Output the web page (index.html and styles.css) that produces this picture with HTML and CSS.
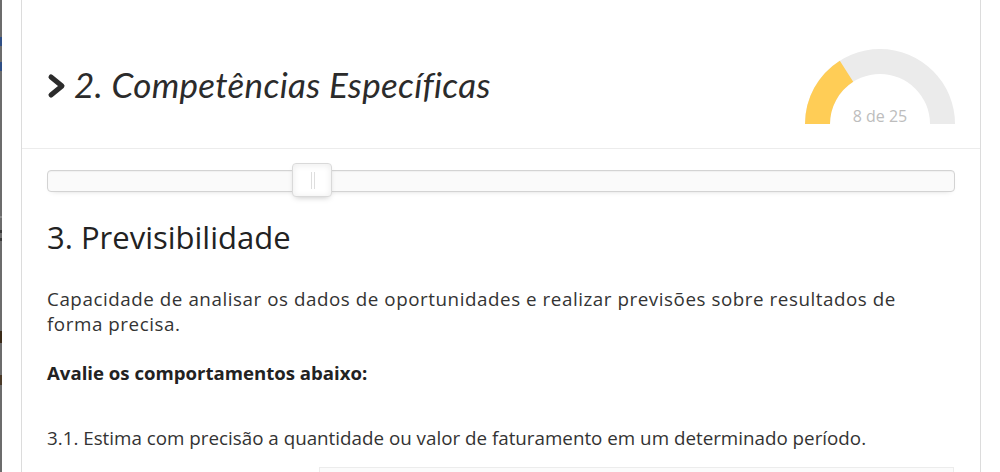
FILE: index.html
```html
<!DOCTYPE html>
<html lang="pt">
<head>
<meta charset="utf-8">
<title>Competências</title>
<link rel="stylesheet" href="styles.css">
</head>
<body>
<div class="page">
  <div class="strip"></div>
  <div class="gutter"></div>
  <div class="panel">
    <header class="head">
      <div class="title">
        <svg class="chev" width="20" height="26" viewBox="0 0 20 26" aria-hidden="true">
          <path d="M4 4 L15 13 L4 22" fill="none" stroke="#2b2b2b" stroke-width="5" stroke-linecap="round" stroke-linejoin="round"/>
        </svg>
        <h2>2. Competências Específicas</h2>
      </div>
      <svg class="gauge" width="150" height="75" viewBox="0 0 150 75">
        <path d="M0 75 A75 75 0 0 1 150 75 L125 75 A50 50 0 0 0 25 75 Z" fill="#ebebeb"/>
        <path d="M0 75 A75 75 0 0 1 34.81 11.68 L48.21 32.79 A50 50 0 0 0 25 75 Z" fill="#ffcd56"/>
        <text x="75" y="73" text-anchor="middle" class="gauge-text">8 de 25</text>
      </svg>
    </header>
    <section class="content">
      <div class="slider">
        <div class="track">
          <div class="handle" style="left:244px"></div>
        </div>
      </div>
      <h3>3. Previsibilidade</h3>
      <p class="desc">Capacidade de analisar os dados de oportunidades e realizar previsões sobre resultados de forma precisa.</p>
      <p class="prompt">Avalie os comportamentos abaixo:</p>
      <p class="item">3.1. Estima com precisão a quantidade ou valor de faturamento em um determinado período.</p>
      <div class="answer-row"><div class="answer-box"></div></div>
    </section>
  </div>
  <div class="gutter-right"></div>
</div>
</body>
</html>
```

FILE: styles.css
```css
html, body {
  margin: 0;
  padding: 0;
  background: #fff;
  height: 472px;
  overflow: hidden;
}
.page {
  display: flex;
  height: 472px;
  font-family: "Open Sans", "Liberation Sans", sans-serif;
  color: #333;
}
.strip {
  width: 2px;
  flex: none;
  background:
    linear-gradient(to bottom,
      #6c6c6c 0, #6c6c6c 37px,
      #2f4f85 37px, #2f4f85 46px,
      #6c6c6c 46px, #6c6c6c 62px,
      #2f4f85 62px, #2f4f85 71px,
      #6c6c6c 71px, #6c6c6c 216px,
      #8a8a8a 216px, #8a8a8a 218px,
      #6c6c6c 218px, #6c6c6c 230px,
      #3a3a3a 230px, #3a3a3a 233px,
      #6c6c6c 233px, #6c6c6c 238px,
      #3a3a3a 238px, #3a3a3a 241px,
      #6c6c6c 241px, #6c6c6c 331px,
      #3a2a18 331px, #3a2a18 343px,
      #6c6c6c 343px, #6c6c6c 375px,
      #4a3a28 375px, #4a3a28 385px,
      #6c6c6c 385px);
}
.gutter {
  width: 19px;
  flex: none;
}
.panel {
  width: 958px;
  flex: none;
  border-left: 1px solid #dcdcdc;
  border-right: 1px solid #dcdcdc;
  display: flex;
  flex-direction: column;
  overflow: hidden;
}
.gutter-right {
  flex: 1;
}
.head {
  flex: none;
  height: 124px;
  padding: 24px 25px 0 25px;
  border-bottom: 1px solid #ececec;
  display: flex;
  align-items: center;
  justify-content: space-between;
}
.title {
  display: flex;
  align-items: center;
  gap: 7px;
}
.chev {
  display: block;
  margin-top: 0;
}
.title h2 {
  margin: 0 0 4px;
  font-family: Lato, "Open Sans", sans-serif;
  font-style: italic;
  font-weight: 400;
  font-size: 35px;
  line-height: 40px;
  color: #2b2b2b;
  letter-spacing: 0.3px;
}
.gauge {
  display: block;
  margin-top: 1px;
  overflow: visible;
}
.gauge-text {
  font-family: "Open Sans", sans-serif;
  font-size: 16px;
  fill: #bdbdbd;
}
.content {
  flex: none;
  padding: 0 25px;
}
.slider {
  padding-top: 21px;
}
.track {
  position: relative;
  height: 20px;
  border: 1px solid #d3d3d3;
  border-radius: 4px;
  background: #fafafa;
  box-shadow: inset 0 1px 1px #f0f0f0, 0 3px 6px -5px #bbb;
}
.handle {
  position: absolute;
  top: -8px;
  width: 38px;
  height: 32px;
  border: 1px solid #d9d9d9;
  border-radius: 4px;
  background: #fff;
  box-shadow: inset 0 0 1px #fff, inset 0 1px 7px #ebebeb, 0 3px 6px -3px #bbb;
}
.handle::before,
.handle::after {
  content: "";
  position: absolute;
  top: 8px;
  width: 1px;
  height: 17px;
  background: #dedede;
}
.handle::before { left: 18px; }
.handle::after { left: 21px; }
h3 {
  margin: 23px 0 0;
  font-size: 31px;
  font-weight: 400;
  line-height: 44px;
  color: #222;
}
.desc {
  margin: 28px 0 0;
  max-width: 880px;
  font-size: 18.8px;
  letter-spacing: 0.55px;
  line-height: 25px;
  color: #333;
}
.prompt {
  margin: 23px 0 0;
  font-size: 18.6px;
  line-height: 25px;
  font-weight: 700;
  color: #222;
}
.item {
  margin: 41px 0 0;
  font-size: 18.8px;
  line-height: 25px;
  color: #333;
}
.answer-row {
  display: flex;
  padding-left: 272px;
  margin-top: 16px;
}
.answer-box {
  flex: 1;
  height: 40px;
  margin-right: 1px;
  border: 1px solid #ececec;
  background: #fbfbfb;
}
```
